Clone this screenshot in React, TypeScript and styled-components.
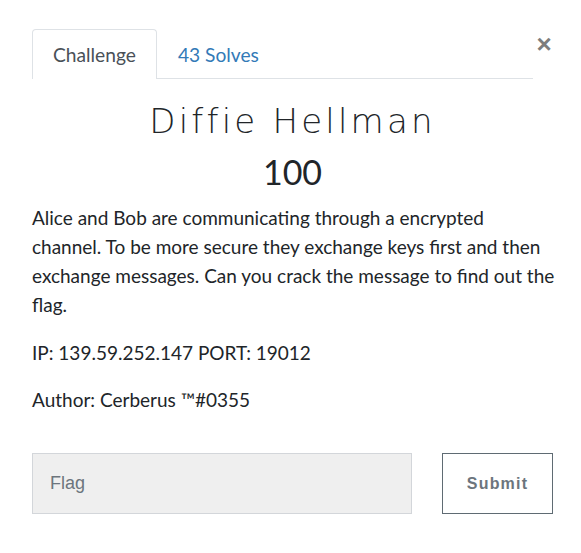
import React from 'react';
import styled, { createGlobalStyle } from 'styled-components';

const GlobalStyle = createGlobalStyle`
  body {
    margin: 0;
    background: #fff;
    font-family: 'Lato', 'Liberation Sans', sans-serif;
    color: #212529;
  }
`;

const challenge = {
  name: 'Diffie Hellman',
  value: 100,
  solves: 43,
  description: [
    'Alice and Bob are communicating through a encrypted channel. To be more secure they exchange keys first and then exchange messages. Can you crack the message to find out the flag.',
    'IP: 139.59.252.147 PORT: 19012',
    'Author: Cerberus \u2122#0355',
  ],
};

const App: React.FC = () => {
  return (
    <>
      <GlobalStyle />
      <Modal>
        <Header>
          <Tabs>
            <Tab active>Challenge</Tab>
            <Tab>{challenge.solves} Solves</Tab>
          </Tabs>
          <Close aria-label="Close">×</Close>
        </Header>
        <Title>{challenge.name}</Title>
        <Value>{challenge.value}</Value>
        <Description>
          {challenge.description.map((p) => (
            <p key={p}>{p}</p>
          ))}
        </Description>
        <SubmitRow>
          <FlagInput placeholder="Flag" />
          <SubmitButton>Submit</SubmitButton>
        </SubmitRow>
      </Modal>
    </>
  );
};

const Modal = styled.div`
  padding: 29px 28px 0 32px;
`;

const Header = styled.div`
  display: flex;
  align-items: flex-start;
`;

const Tabs = styled.div`
  display: flex;
  width: 505px;
  border-bottom: 1px solid #dee2e6;
`;

const Tab = styled.div<{ active?: boolean }>`
  height: 48px;
  padding: 0 20px;
  display: flex;
  align-items: center;
  font-size: 19.2px;
  border: 1px solid ${(p) => (p.active ? '#dee2e6' : 'transparent')};
  border-bottom: none;
  border-radius: 4px 4px 0 0;
  margin-bottom: -1px;
  background: #fff;
  color: ${(p) => (p.active ? '#495057' : '#337ab7')};
  ${(p) => p.active && 'height: 49px;'}
`;

const Close = styled.button`
  margin-left: 2px;
  margin-top: 3px;
  border: none;
  background: none;
  padding: 0;
  width: 18px;
  font-family: 'Liberation Sans', sans-serif;
  font-size: 26px;
  font-weight: 700;
  line-height: 24px;
  color: #7d7d7d;
  cursor: pointer;
`;

const Title = styled.h2`
  margin: 20px 0 0;
  text-align: center;
  font-family: 'DejaVu Sans', sans-serif;
  font-weight: 200;
  font-size: 34px;
  letter-spacing: 3.2px;
  line-height: 44px;
  color: #212529;
`;

const Value = styled.h3`
  margin: 10px 0 0;
  text-align: center;
  font-weight: 400;
  font-size: 34px;
  line-height: 38px;
  color: #212529;
`;

const Description = styled.div`
  margin: 12px -2px 0 0;
  font-size: 19px;
  line-height: 29px;
  color: #212529;

  p {
    margin: 0 0 18.5px;
  }
`;

const SubmitRow = styled.div`
  display: grid;
  grid-template-columns: 1fr 111px;
  gap: 30px;
  margin-top: 39px;
`;

const FlagInput = styled.input`
  height: 61px;
  box-sizing: border-box;
  padding: 0 17px;
  background: #efefef;
  border: 1px solid #d3d6da;
  font-family: 'Liberation Sans', sans-serif;
  font-size: 18px;
  color: #495057;
  outline: none;

  &::placeholder {
    color: #6c757d;
  }
`;

const SubmitButton = styled.button`
  height: 61px;
  box-sizing: border-box;
  background: #fff;
  border: 1px solid #5f6b73;
  font-family: 'Liberation Sans', sans-serif;
  font-weight: 700;
  font-size: 16px;
  letter-spacing: 1.2px;
  color: #6c757d;
  cursor: pointer;
`;

export default App;
